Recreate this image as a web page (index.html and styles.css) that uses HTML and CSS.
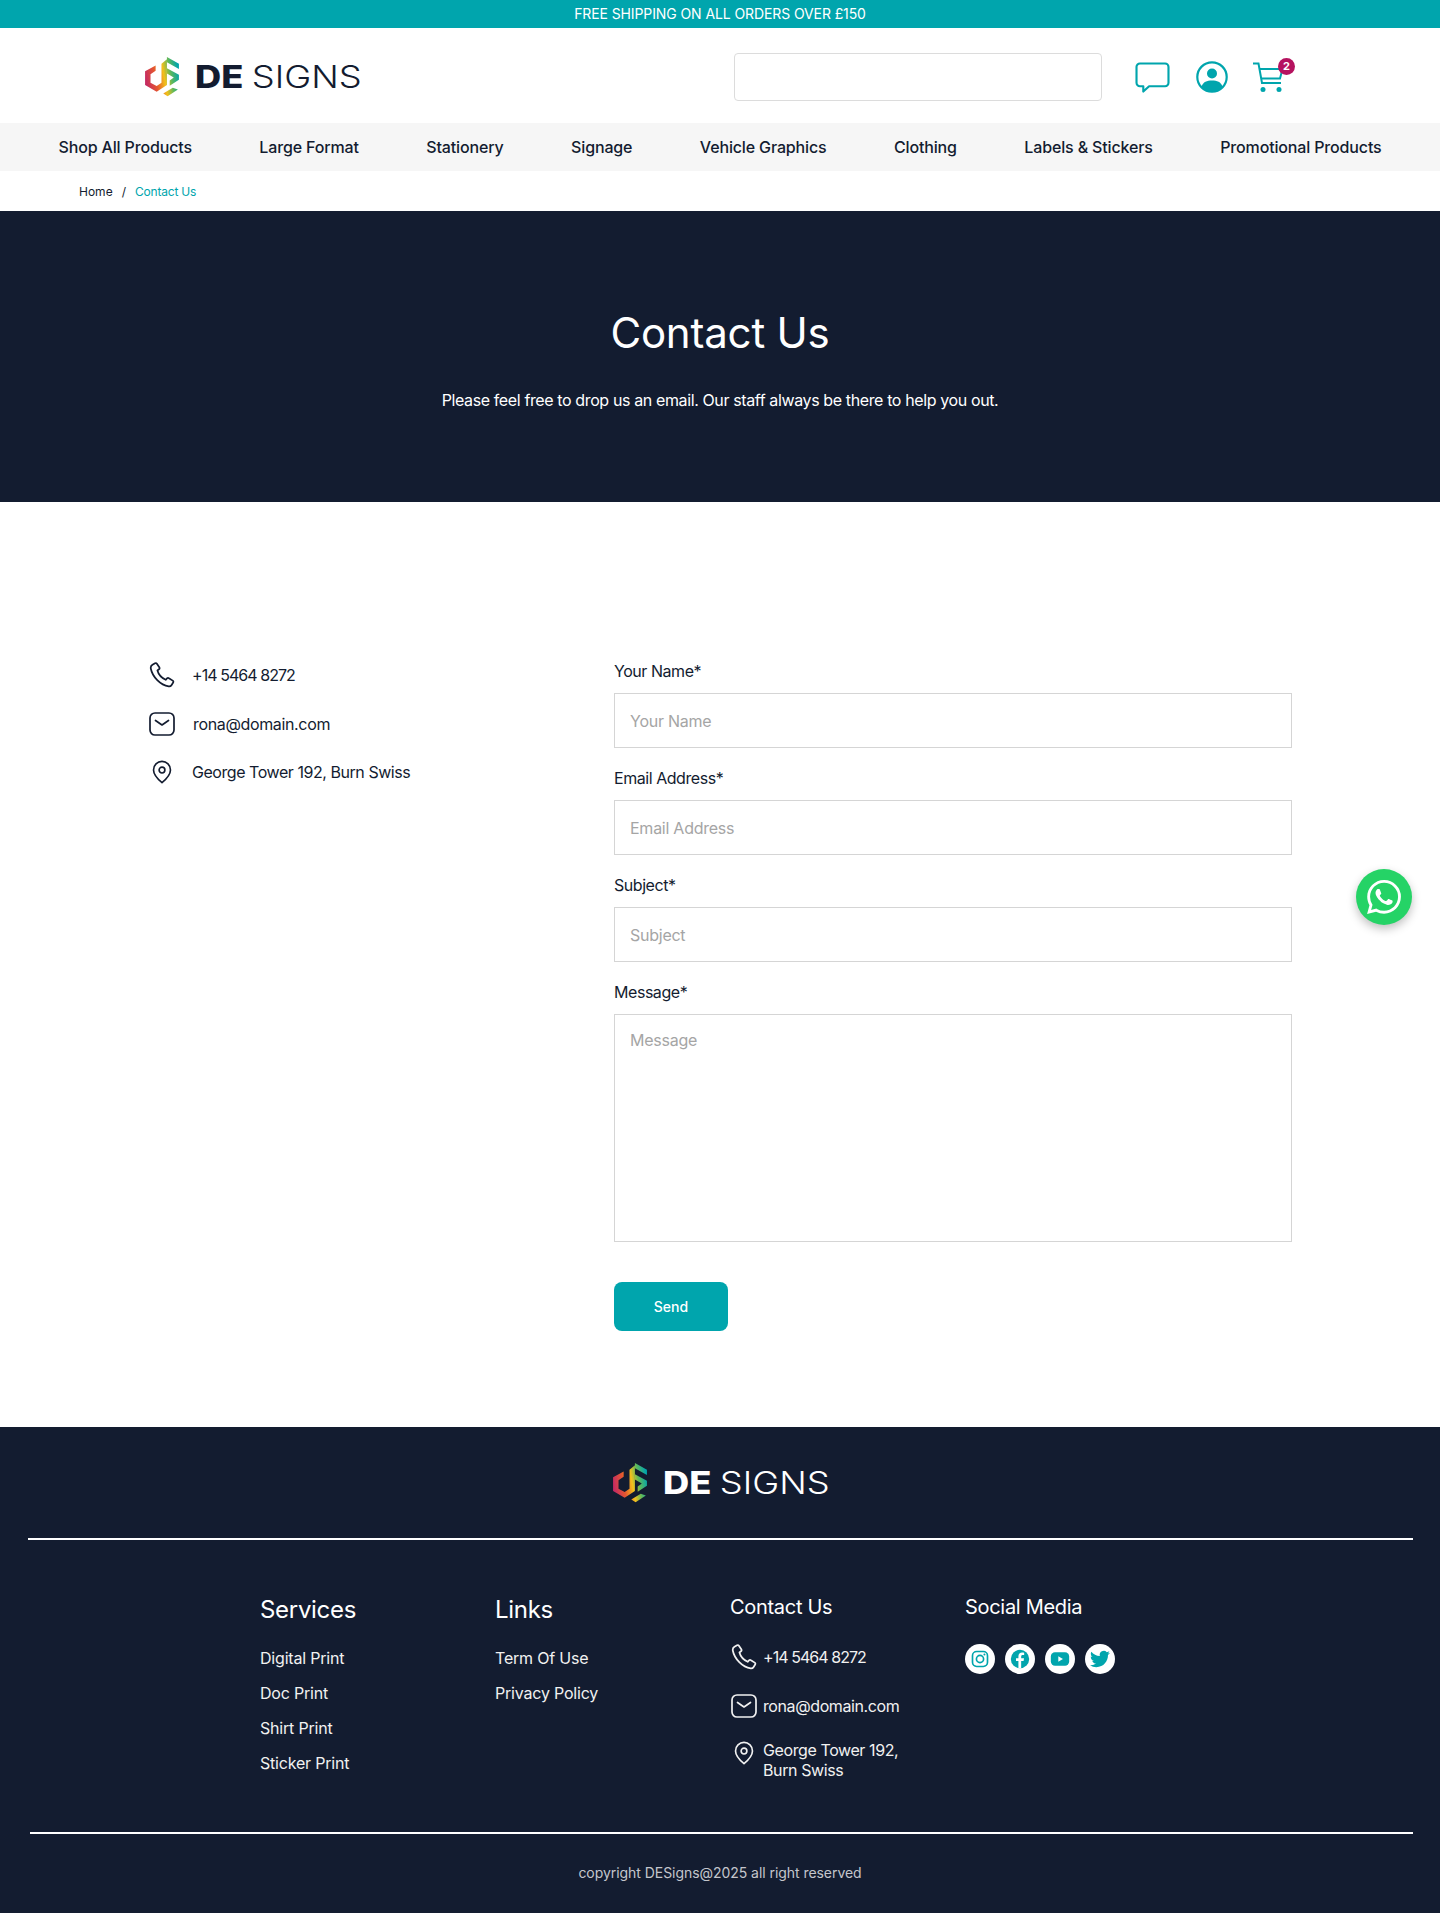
FILE: index.html
```html
<!DOCTYPE html>
<html>
   <head>
      <title>Contact Us</title>
      <meta charset="utf-8">
      <link rel="stylesheet" href="styles.css">
   </head>

   <body>
      <svg class="defs" width="0" height="0">
         <defs>
            <linearGradient id="logo_grad" gradientUnits="userSpaceOnUse" x1="0" y1="20" x2="33" y2="14">
               <stop offset="0" stop-color="#c42a63"/>
               <stop offset="0.3" stop-color="#e5572f"/>
               <stop offset="0.55" stop-color="#f2c01c"/>
               <stop offset="0.75" stop-color="#5fb85a"/>
               <stop offset="1" stop-color="#00a5ad"/>
            </linearGradient>
            <symbol id="logo_mark" viewBox="0 0 33 39">
               <path fill="url(#logo_grad)" d="M10.300 8.300 0 14V27.300L11.300 34 21.300 27.300V2.300L16 6.700V25L11.300 28.300 5.300 25V16.700L10.300 13.300Z"/>
               <path fill="url(#logo_grad)" d="M21.300 0 33 6.700V11.700L21.300 5ZM21.300 11 33 17.300V22.300L24 28V23L28 20 21.300 16Z"/>
               <path fill="url(#logo_grad)" d="M17.700 35.700 27 30 32 31.700 22 38.300Z"/>
            </symbol>
            <symbol id="ic_phone" viewBox="0 0 24 24">
               <path fill="none" stroke="currentColor" stroke-width="1.6" stroke-linejoin="round" d="M3.200 2.600 5.600 1.200C6.200.9 6.900 1 7.300 1.600L9.500 4.900C9.900 5.500 9.800 6.200 9.200 6.700L7.800 7.800C8.600 10.800 11.600 14.600 15.400 16.400L16.600 15.200C17.100 14.700 17.800 14.600 18.400 15L21.900 17.200C22.500 17.600 22.700 18.400 22.300 19L20.900 21.200C20.300 22.100 19.300 22.700 18.200 22.500 10.500 21.400 3.200 13.600 1.700 6.200 1.400 4.900 2.100 3.300 3.200 2.600Z"/>
            </symbol>
            <symbol id="ic_mail" viewBox="0 0 26 24">
               <rect x="1" y="1" width="24" height="22" rx="5" fill="none" stroke="currentColor" stroke-width="1.700"/>
               <path d="M6.500 8.500 13 13l6.500-4.500" fill="none" stroke="currentColor" stroke-width="1.700" stroke-linecap="round" stroke-linejoin="round"/>
            </symbol>
            <symbol id="ic_pin" viewBox="-2 -1.500 24 27">
               <path d="M10 23C6 19.600 1.200 15.400 1.200 9.800a8.800 8.800 0 0 1 17.600 0C18.800 15.400 14 19.600 10 23Z" fill="none" stroke="currentColor" stroke-width="1.700" stroke-linejoin="round"/>
               <circle cx="10" cy="10" r="3" fill="none" stroke="currentColor" stroke-width="1.700"/>
            </symbol>
         </defs>
      </svg>

      <div class="top_bar">FREE SHIPPING ON ALL ORDERS OVER £150</div>

      <header class="header">
         <a class="logo">
            <svg class="logo_mark"><use href="#logo_mark"/></svg>
            <span class="logo_text"><b>DE</b> <span>SIGNS</span></span>
         </a>
         <div class="search_box"></div>
         <div class="header_icons">
            <svg class="ic_chat" viewBox="0 0 36 32" fill="none" stroke="#00a5ad" stroke-width="2.200">
               <path d="M5 1.500H31A3.500 3.500 0 0 1 34.500 5V21.500A3.500 3.500 0 0 1 31 25H14.500L8.500 30.500V25H5A3.500 3.500 0 0 1 1.500 21.500V5A3.500 3.500 0 0 1 5 1.500Z" stroke-linejoin="round"/>
            </svg>
            <svg class="ic_user" viewBox="0 0 32 32">
               <circle cx="16" cy="16" r="14.700" fill="none" stroke="#00a5ad" stroke-width="2.200"/>
               <circle cx="16" cy="12.500" r="5" fill="#00a5ad"/>
               <path d="M5.500 25.500C7 21 11 19.500 16 19.500S25 21 26.500 25.500C24 28.700 20 30.500 16 30.500S8 28.700 5.500 25.500Z" fill="#00a5ad"/>
            </svg>
            <div class="cart">
               <svg class="ic_cart" viewBox="0 0 32 31" fill="none" stroke="#00a5ad" stroke-width="2">
                  <path d="M1 1.500H6.500L10 21H29"/>
                  <path d="M7.500 7H30.500L28 16.500H9"/>
                  <circle cx="11" cy="27.500" r="2.500" fill="#00a5ad" stroke="none"/>
                  <circle cx="27" cy="27.500" r="2.500" fill="#00a5ad" stroke="none"/>
               </svg>
               <span class="badge">2</span>
            </div>
         </div>
      </header>

      <nav class="nav">
         <a>Shop All Products</a>
         <a>Large Format</a>
         <a>Stationery</a>
         <a>Signage</a>
         <a>Vehicle Graphics</a>
         <a>Clothing</a>
         <a>Labels &amp; Stickers</a>
         <a>Promotional Products</a>
      </nav>

      <div class="breadcrumb">
         <a>Home</a>
         <span>/</span>
         <a class="current">Contact Us</a>
      </div>

      <section class="hero">
         <h1>Contact Us</h1>
         <p>Please feel free to drop us an email. Our staff always be there to help you out.</p>
      </section>

      <main class="content">
         <ul class="contact_list">
            <li><svg class="ic"><use href="#ic_phone"/></svg><span class="tel">+14 5464 8272</span></li>
            <li><svg class="ic"><use href="#ic_mail"/></svg><span class="mail">rona@domain.com</span></li>
            <li><svg class="ic"><use href="#ic_pin"/></svg>George Tower 192, Burn Swiss</li>
         </ul>
         <form class="form">
            <label>Your Name*</label>
            <input type="text" placeholder="Your Name">
            <label>Email Address*</label>
            <input type="text" placeholder="Email Address">
            <label>Subject*</label>
            <input type="text" placeholder="Subject">
            <label>Message*</label>
            <textarea placeholder="Message"></textarea>
            <button type="button">Send</button>
         </form>
      </main>

      <a class="whatsapp">
         <svg viewBox="0 0 24 24" width="34" height="34" fill="#fff"><path d="M17.472 14.382c-.297-.149-1.758-.867-2.03-.967-.273-.099-.471-.148-.67.15-.197.297-.767.966-.94 1.164-.173.199-.347.223-.644.075-.297-.15-1.255-.463-2.39-1.475-.883-.788-1.48-1.761-1.653-2.059-.173-.297-.018-.458.13-.606.134-.133.298-.347.446-.52.149-.174.198-.298.298-.497.099-.198.05-.371-.025-.52-.075-.149-.669-1.612-.916-2.207-.242-.579-.487-.5-.669-.51-.173-.008-.371-.01-.57-.01-.198 0-.52.074-.792.372-.272.297-1.04 1.016-1.04 2.479 0 1.462 1.065 2.875 1.213 3.074.149.198 2.096 3.2 5.077 4.487.709.306 1.262.489 1.694.625.712.227 1.36.195 1.871.118.571-.085 1.758-.719 2.006-1.413.248-.694.248-1.289.173-1.413-.074-.124-.272-.198-.57-.347m-5.421 7.403h-.004a9.87 9.87 0 01-5.031-1.378l-.361-.214-3.741.982.998-3.648-.235-.374a9.86 9.86 0 01-1.51-5.26c.001-5.45 4.436-9.884 9.888-9.884 2.64 0 5.122 1.03 6.988 2.898a9.825 9.825 0 012.893 6.994c-.003 5.45-4.437 9.884-9.885 9.884m8.413-18.297A11.815 11.815 0 0012.05 0C5.495 0 .16 5.335.157 11.892c0 2.096.547 4.142 1.588 5.945L.057 24l6.305-1.654a11.882 11.882 0 005.683 1.448h.005c6.554 0 11.89-5.335 11.893-11.893a11.821 11.821 0 00-3.48-8.413z"/></svg>
      </a>

      <footer class="footer">
         <a class="logo logo_light">
            <svg class="logo_mark"><use href="#logo_mark"/></svg>
            <span class="logo_text"><b>DE</b> <span>SIGNS</span></span>
         </a>
         <hr class="rule_top">
         <div class="footer_cols">
            <div>
               <h3 class="big">Services</h3>
               <a>Digital Print</a>
               <a>Doc Print</a>
               <a>Shirt Print</a>
               <a>Sticker Print</a>
            </div>
            <div>
               <h3 class="big">Links</h3>
               <a>Term Of Use</a>
               <a>Privacy Policy</a>
            </div>
            <div>
               <h3>Contact Us</h3>
               <ul class="footer_contact">
                  <li><svg class="ic"><use href="#ic_phone"/></svg><span class="tel">+14 5464 8272</span></li>
                  <li><svg class="ic"><use href="#ic_mail"/></svg>rona@domain.com</li>
                  <li><svg class="ic"><use href="#ic_pin"/></svg><span>George Tower 192,<br>Burn Swiss</span></li>
               </ul>
            </div>
            <div>
               <h3>Social Media</h3>
               <div class="socials">
                  <a><svg viewBox="0 0 24 24" fill="none" stroke="#00a5ad" stroke-width="2"><rect x="3" y="3" width="18" height="18" rx="5"/><circle cx="12" cy="12" r="4.300"/><circle cx="17.300" cy="6.700" r="1.200" fill="#00a5ad" stroke="none"/></svg></a>
                  <a><svg viewBox="0 0 24 24"><circle cx="12" cy="12" r="11" fill="#00a5ad"/><path d="M13.400 23V14.500H16.300L16.800 11.200H13.400V9.100C13.400 8.100 13.900 7.300 15.200 7.300H17V4.400C16.400 4.300 15.500 4.200 14.500 4.200 11.900 4.200 10.100 5.800 10.100 8.700V11.200H7.200V14.500H10.100V23Z" fill="#fff"/></svg></a>
                  <a><svg viewBox="0 0 24 24"><rect x="1" y="4" width="22" height="16" rx="5" fill="#00a5ad"/><path d="M10 8.700 15.500 12 10 15.300Z" fill="#fff"/></svg></a>
                  <a><svg viewBox="0 0 24 24" fill="#00a5ad"><path d="M23.953 4.57a10 10 0 01-2.825.775 4.958 4.958 0 002.163-2.723c-.951.555-2.005.959-3.127 1.184a4.92 4.92 0 00-8.384 4.482C7.69 8.095 4.067 6.13 1.64 3.162a4.822 4.822 0 00-.666 2.475c0 1.71.87 3.213 2.188 4.096a4.904 4.904 0 01-2.228-.616v.06a4.923 4.923 0 003.946 4.827 4.996 4.996 0 01-2.212.085 4.936 4.936 0 004.604 3.417 9.867 9.867 0 01-6.102 2.105c-.39 0-.779-.023-1.17-.067a13.995 13.995 0 007.557 2.209c9.053 0 13.998-7.496 13.998-13.985 0-.21 0-.42-.015-.63A9.935 9.935 0 0024 4.59z"/></svg></a>
               </div>
            </div>
         </div>
         <hr class="rule_bottom">
         <p class="copyright">copyright DESigns@2025 all right reserved</p>
      </footer>
   </body>
</html>
```

FILE: styles.css
```css
* {box-sizing: border-box;}
html, body {margin: 0; padding: 0;}
body {font-family: Inter, "Noto Sans", sans-serif; color: #131c30; background: #fff; font-size: 16px; position: relative;}
a {color: inherit; text-decoration: none;}
ul {list-style: none; margin: 0; padding: 0;}
.defs {position: absolute;}
.tel {letter-spacing: -.95px;}

.top_bar {height: 28px; background: #00a5ad; color: #fff; font-size: 14px; line-height: 28px; text-align: center; letter-spacing: -.1px;}

.header {height: 95px; display: flex; align-items: center; padding: 2px 0 0 144px;}
.logo {display: flex; align-items: center; width: 590px; flex: none;}
.logo_mark {width: 36px; height: 40px; flex: none;}
.logo_text {font-size: 31px; line-height: 40px; margin-left: 15px; white-space: nowrap; word-spacing: -1.500px; transform: scaleX(1.17); transform-origin: left center;}
.logo_text b {font-weight: 800;}
.logo_text span {font-weight: 300;}
.search_box {width: 368px; height: 48px; border: 1px solid #dcdcdc; border-radius: 4px;}
.header_icons {display: flex; align-items: center; margin: 1px 0 0 33px;}
.ic_chat {width: 35px; height: 31px;}
.ic_user {width: 32px; height: 32px; margin-left: 26px;}
.cart {position: relative; margin-left: 24px; height: 31px; width: 32px;}
.ic_cart {width: 32px; height: 31px; display: block;}
.badge {position: absolute; top: -4px; left: 26px; width: 17px; height: 17px; border-radius: 50%; background: #b5125f; color: #fff; font-size: 11px; font-weight: 700; line-height: 17px; text-align: center;}

.nav {height: 48px; background: #f6f6f6; display: flex; align-items: center; justify-content: center; gap: 67.500px; font-size: 16px; font-weight: 500; letter-spacing: -.15px;}

.breadcrumb {height: 40px; display: flex; align-items: center; gap: 9px; padding-left: 79px; font-size: 12px;}
.breadcrumb .current {color: #00a5ad; letter-spacing: -.2px;}

.hero {height: 291px; background: #131c30; color: #fff; text-align: center; padding-top: 97px;}
.hero h1 {margin: 0; font-size: 42px; font-weight: 400; line-height: 50px; letter-spacing: -.2px;}
.hero p {margin: 30px 0 0; font-size: 16px; line-height: 24px; letter-spacing: -.38px;}

.content {height: 925px; display: flex; padding: 149px 0 0 149px;}
.contact_list {width: 465px; flex: none; font-size: 16px; letter-spacing: -.45px;}
.contact_list li {display: flex; align-items: center; height: 48.500px; gap: 17px;}
.contact_list .tel {letter-spacing: -.95px;}
.contact_list .mail {margin-left: 1px; letter-spacing: -.35px;}
.ic {width: 26px; height: 26px; flex: none;}
.form {width: 678px; display: flex; flex-direction: column; align-items: flex-start; padding-top: 8px;}
.form label {font-size: 16px; line-height: 24px; margin-bottom: 10px; letter-spacing: -.45px;}
.form input, .form textarea {width: 100%; display: block; border: 1px solid #d5d5d5; background: #fff; font-family: inherit; font-size: 16px; padding: 0 15px; color: #131c30; outline: none; border-radius: 0; letter-spacing: -.25px;}
.form input {height: 55px; margin-bottom: 18px;}
.form textarea {height: 228px; padding-top: 15px; resize: none; display: block;}
.form ::placeholder {color: #a5a5a5; opacity: 1;}
.form button {margin-top: 40px; width: 114px; height: 49px; background: #00a5ad; color: #fff; border: 0; border-radius: 8px; font-family: inherit; font-size: 14px; font-weight: 500;}

.whatsapp {position: absolute; left: 1356px; top: 869px; width: 56px; height: 56px; border-radius: 50%; background: #25d366; box-shadow: 0 4px 10px rgba(0,0,0,.25); display: flex; align-items: center; justify-content: center;}

.footer {height: 486px; background: #131c30; color: #fff; padding-top: 36px;}
.logo_light {width: 218px; margin: 0 auto; position: relative; left: 1px;}
.footer hr {border: 0; height: 2px; background: #fff; margin: 0;}
.rule_top {margin: 35px 27px 0 28px !important;}
.rule_bottom {margin: 0 27px 0 30px !important;}
.footer_cols {height: 292px; display: grid; grid-template-columns: repeat(4, 235px); padding: 54px 0 0 260px; font-size: 16px; color: #f1f1f1; letter-spacing: -.2px;}
.footer_cols h3 {margin: 0 0 24px; font-size: 20px; font-weight: 400; line-height: 26px; color: #fff; letter-spacing: -.3px;}
.footer_cols h3.big {font-size: 24px; line-height: 32px; margin-bottom: 15px;}
.footer_cols > div > a {display: block; line-height: 35px;}
.footer_contact {letter-spacing: -.4px;}
.footer_contact li {display: flex; align-items: center; gap: 6px; margin-bottom: 23px; line-height: 20px;}
.footer_contact .ic {margin-left: 1px;}
.footer_contact .tel {letter-spacing: -.95px;}
.footer_contact li:last-child {align-items: flex-start; margin-top: -2px;}
.socials {display: flex; gap: 10px;}
.socials a {width: 30px; height: 30px; background: #fff; border-radius: 50%; display: flex; align-items: center; justify-content: center;}
.socials svg {width: 20px; height: 20px;}
.copyright {margin: 29px 0 0; text-align: center; font-size: 14px; line-height: 20px; color: #c4c6cc; letter-spacing: -.05px;}
```
